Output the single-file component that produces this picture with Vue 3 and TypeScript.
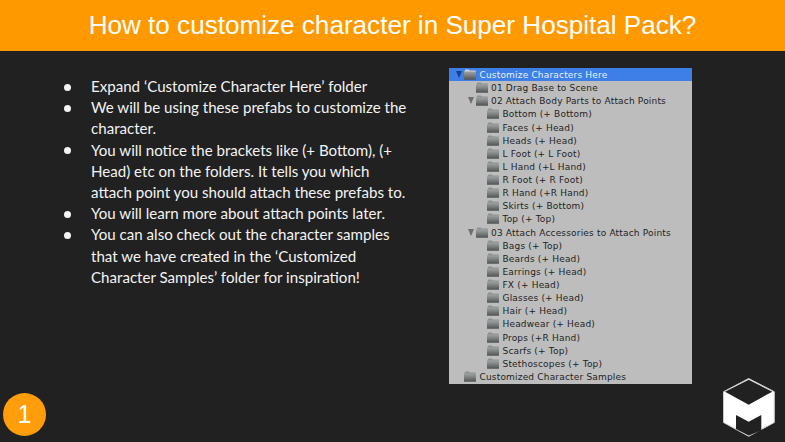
<script setup lang="ts">
interface Row { label: string; level: number; arrow?: boolean; selected?: boolean }
const bullets: string[] = [
  'Expand ‘Customize Character Here’ folder',
  'We will be using these prefabs to customize the character.',
  'You will notice the brackets like (+ Bottom), (+ Head) etc on the folders. It tells you which attach point you should attach these prefabs to.',
  'You will learn more about attach points later.',
  'You can also check out the character samples that we have created in the ‘Customized Character Samples’ folder for inspiration!',
]
const rows: Row[] = [
  { label: 'Customize Characters Here', level: 0, arrow: true, selected: true },
  { label: '01 Drag Base to Scene', level: 1 },
  { label: '02 Attach Body Parts to Attach Points', level: 1, arrow: true },
  ...['Bottom (+ Bottom)', 'Faces (+ Head)', 'Heads (+ Head)', 'L Foot (+ L Foot)', 'L Hand (+L Hand)', 'R Foot (+ R Foot)', 'R Hand (+R Hand)', 'Skirts (+ Bottom)', 'Top (+ Top)'].map((label) => ({ label, level: 2 })),
  { label: '03 Attach Accessories to Attach Points', level: 1, arrow: true },
  ...['Bags (+ Top)', 'Beards (+ Head)', 'Earrings (+ Head)', 'FX (+ Head)', 'Glasses (+ Head)', 'Hair (+ Head)', 'Headwear (+ Head)', 'Props (+R Hand)', 'Scarfs (+ Top)', 'Stethoscopes (+ Top)'].map((label) => ({ label, level: 2 })),
  { label: 'Customized Character Samples', level: 0 },
]
</script>

<template>
  <div class="slide">
    <header class="title">How to customize character in Super Hospital Pack?</header>
    <main class="content">
      <ul class="bullets">
        <li v-for="b in bullets" :key="b"><span class="dot"></span><span>{{ b }}</span></li>
      </ul>
      <div class="tree">
        <div v-for="r in rows" :key="r.label" class="row" :class="[`level-${r.level}`, { selected: r.selected }]">
          <span class="arrow" :class="{ visible: r.arrow }"></span>
          <svg class="folder" viewBox="0 0 12 11" width="12" height="11">
            <defs>
              <linearGradient id="fold" x1="0" y1="0" x2="0" y2="1">
                <stop offset="0" stop-color="#9fa2a2" />
                <stop offset="0.35" stop-color="#858888" />
                <stop offset="1" stop-color="#4f5252" />
              </linearGradient>
            </defs>
            <path class="tab" d="M0.3 3 L1.3 0.4 H4.8 L5.8 1.4 H11.7 V3 H0.3Z" />
            <rect x="0" y="2.6" width="12" height="8.2" rx="0.6" fill="url(#fold)" />
          </svg>
          <span class="label">{{ r.label }}</span>
        </div>
      </div>
    </main>
    <div class="badge">1</div>
    <svg class="logo" viewBox="0 0 52 59" width="52" height="59">
      <path d="M25.7 0.5 L51.3 13.7 V44.5 L25.7 58.3 L0.5 44.5 V13.7Z" fill="#fff" stroke="#c9c9c9" stroke-width="1" />
      <path d="M25.7 1.7 L49.3 13.7 L25.7 26.7 L2 13.7Z" fill="#212121" />
      <path d="M13 37 L25.7 43.7 L38.3 37 V52.5 L25.7 57.5 L13 51Z" fill="#212121" />
    </svg>
  </div>
</template>

<style>
html, body { margin: 0; background: #212121; }
</style>

<style scoped>
.slide {
  position: relative;
  width: 785px;
  height: 442px;
  overflow: hidden;
  background: #212121;
}
.title {
  height: 51px;
  background: #ff9900;
  color: #fff;
  text-align: center;
  font: 26.1px/50px "Liberation Sans", Arial, sans-serif;
}
.content {
  display: flex;
  justify-content: space-between;
  padding: 17px 93px 0 0;
}
.bullets {
  list-style: none;
  width: 345px;
  margin: 8px 0 0;
  padding: 0 0 0 64px;
  color: #f3f3f3;
  font: 15.1px/21.2px Lato, sans-serif;
}
.bullets li {
  display: flex;
  gap: 20px;
}
.dot {
  flex: none;
  width: 7px;
  height: 7px;
  margin-top: 7.5px;
  border-radius: 50%;
  background: #f3f3f3;
}
.tree {
  width: 243px;
  height: 316px;
  background: #bdbdbd;
  font: 9px/13.1px "DejaVu Sans", sans-serif;
  letter-spacing: 0.18px;
  color: #1f1f1f;
}
.row {
  display: flex;
  align-items: center;
  height: 13.13px;
  white-space: nowrap;
}
.row.selected { background: #3d7fe6; color: #e8f0ff; }
.level-0 { padding-left: 7px; }
.level-1 { padding-left: 18.5px; }
.level-2 { padding-left: 30px; }
.arrow {
  flex: none;
  width: 0;
  height: 0;
  margin-right: 2px;
  border-style: solid;
  border-width: 7px 3.5px 0;
  border-color: transparent;
}
.arrow.visible { border-top-color: #6e6e6e; }
.selected .arrow.visible { border-top-color: #15418f; }
.folder { flex: none; margin-right: 3.5px; }
.tab { fill: #8f9292; }
.selected .tab { fill: #d2d4d4; }
.label { margin-top: 2px; }
.badge {
  position: absolute;
  left: 3px;
  top: 393px;
  width: 43px;
  height: 43px;
  border-radius: 50%;
  background: #ff9d0a;
  color: #fff;
  text-align: center;
  font: 25px/42px "Liberation Sans", Arial, sans-serif;
}
.logo {
  position: absolute;
  left: 722.5px;
  top: 377.5px;
}
</style>
